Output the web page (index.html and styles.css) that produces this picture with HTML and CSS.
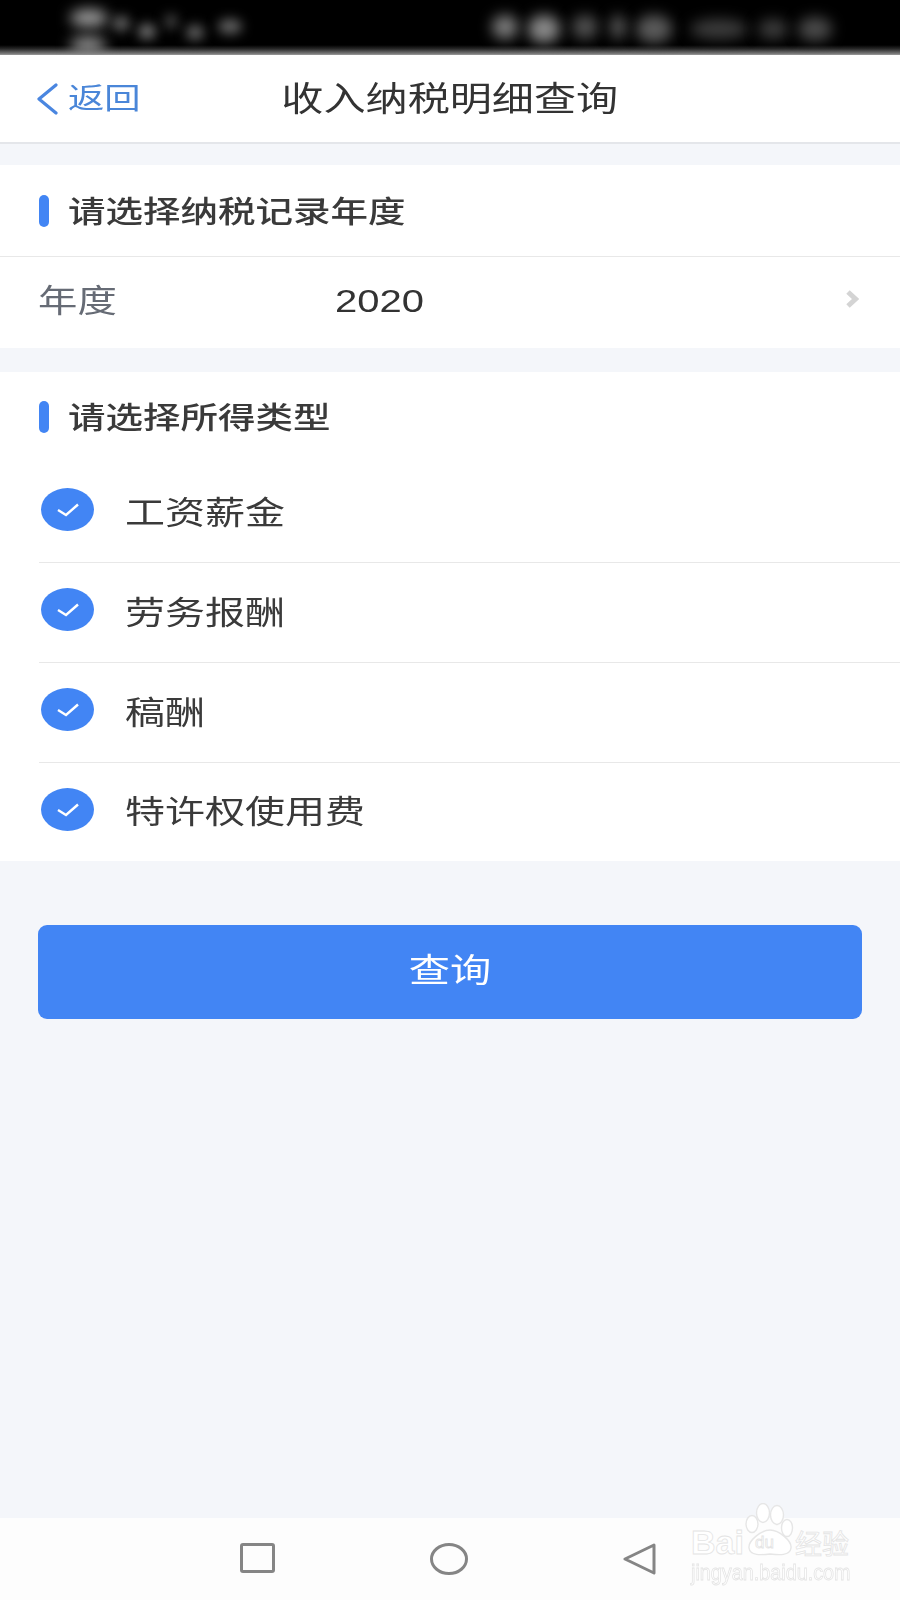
FILE: index.html
```html
<!DOCTYPE html>
<html lang="zh-CN">
<head>
<meta charset="utf-8">
<title>收入纳税明细查询</title>
<link rel="stylesheet" href="styles.css">
</head>
<body>
<div class="page">
  <div class="status">
    <div class="status-left">
      <div class="sig">
        <i class="blob s1"></i>
        <i class="blob s2"></i>
      </div>
      <div class="sig-dots">
        <i class="dot d1"></i><i class="dot d2"></i><i class="dot d3"></i><i class="dot d4"></i><i class="dot d5"></i>
      </div>
    </div>
    <div class="status-right">
      <i class="blob r1"></i><i class="blob r2"></i><i class="blob r3"></i><i class="blob r4"></i>
      <i class="blob r5"></i><i class="blob r6"></i><i class="blob r7"></i><i class="blob r8"></i>
    </div>
  </div>

  <header class="header">
    <div class="back">
      <svg class="back-icon" width="22" height="32" viewBox="0 0 22 32"><path d="M20 2 L3 16 L20 30" fill="none" stroke="#4a86e0" stroke-width="3.2" stroke-linecap="round" stroke-linejoin="round"/></svg>
      <span class="back-text sx">返回</span>
    </div>
    <h1 class="title sx-c">收入纳税明细查询</h1>
    <div></div>
  </header>

  <section class="card first">
    <div class="sec-head bordered"><i class="bar"></i><span class="sec-title sx">请选择纳税记录年度</span></div>
    <div class="year-row">
      <span class="year-label"><span class="sx label-text">年度</span></span>
      <span class="year-value"><span class="sx value-text">2020</span></span>
      <svg class="year-arrow" width="14" height="18" viewBox="0 0 14 18"><path d="M3 2 L10.5 9 L3 16" fill="none" stroke="#d4d4d4" stroke-width="5"/></svg>
    </div>
  </section>

  <section class="card second">
    <div class="sec-head plain"><i class="bar"></i><span class="sec-title sx">请选择所得类型</span></div>
    <div class="opt">
      <svg class="check" width="53" height="43" viewBox="0 0 53 43"><ellipse cx="26.5" cy="21.5" rx="26.5" ry="21.5" fill="#4285f4"/><path d="M17 22 L25 27 L37 16.5" fill="none" stroke="#fff" stroke-width="2.4"/></svg>
      <span class="sx opt-text">工资薪金</span>
    </div>
    <div class="opt">
      <svg class="check" width="53" height="43" viewBox="0 0 53 43"><ellipse cx="26.5" cy="21.5" rx="26.5" ry="21.5" fill="#4285f4"/><path d="M17 22 L25 27 L37 16.5" fill="none" stroke="#fff" stroke-width="2.4"/></svg>
      <span class="sx opt-text">劳务报酬</span>
    </div>
    <div class="opt">
      <svg class="check" width="53" height="43" viewBox="0 0 53 43"><ellipse cx="26.5" cy="21.5" rx="26.5" ry="21.5" fill="#4285f4"/><path d="M17 22 L25 27 L37 16.5" fill="none" stroke="#fff" stroke-width="2.4"/></svg>
      <span class="sx opt-text">稿酬</span>
    </div>
    <div class="opt last">
      <svg class="check" width="53" height="43" viewBox="0 0 53 43"><ellipse cx="26.5" cy="21.5" rx="26.5" ry="21.5" fill="#4285f4"/><path d="M17 22 L25 27 L37 16.5" fill="none" stroke="#fff" stroke-width="2.4"/></svg>
      <span class="sx opt-text">特许权使用费</span>
    </div>
  </section>

  <div class="action">
    <button class="query"><span class="sx-c">查询</span></button>
  </div>

  <nav class="nav">
    <svg width="35" height="30" viewBox="0 0 35 30"><rect x="1.5" y="1.5" width="32" height="27" rx="1.5" fill="none" stroke="#858585" stroke-width="3"/></svg>
    <svg width="38" height="32" viewBox="0 0 38 32"><ellipse cx="19" cy="16" rx="17.5" ry="14.5" fill="none" stroke="#858585" stroke-width="3"/></svg>
    <svg width="33" height="32" viewBox="0 0 33 32"><path d="M31 2 L2 16 L31 30 Z" fill="none" stroke="#858585" stroke-width="3" stroke-linejoin="round"/></svg>

    <div class="mark">
      <div class="mark-top">
        <span class="mark-bai">Bai</span>
        <svg class="paw" width="50" height="54" viewBox="0 0 50 54">
          <g fill="#fff" stroke="#e6e6e6" stroke-width="1.4">
            <ellipse cx="7" cy="21" rx="6" ry="8.5"/>
            <ellipse cx="18" cy="10" rx="6.5" ry="9.5"/>
            <ellipse cx="32" cy="12" rx="6.5" ry="9.5"/>
            <ellipse cx="42" cy="25" rx="5.5" ry="8.5"/>
            <path d="M25 27 C34 27 47 38 46 45 C45 53 34 52 25 51 C16 52 5 53 4 45 C3 38 16 27 25 27 Z"/>
          </g>
        </svg>
        <span class="mark-du">du</span>
        <span class="mark-jy">经验</span>
      </div>
      <div class="mark-url">jingyan.baidu.com</div>
    </div>
  </nav>
</div>
</body>
</html>
```
FILE: styles.css
```css
* { box-sizing: border-box; }
html, body { margin: 0; padding: 0; }
body {
  width: 900px;
  height: 1600px;
  overflow: hidden;
  font-family: "Noto Sans CJK SC", "Liberation Sans", sans-serif;
  background: #f4f6fa;
  color: #333;
}
.page { width: 900px; height: 1600px; display: flex; flex-direction: column; position: relative; overflow: hidden; }

.sx { display: inline-block; transform: scaleX(1.25); transform-origin: left center; white-space: nowrap; filter: blur(.4px); }
.sx-c { display: inline-block; transform: scaleX(1.25); transform-origin: center; white-space: nowrap; filter: blur(.4px); }

/* status bar */
.status {
  height: 55px;
  flex: none;
  background: linear-gradient(to bottom, #000 0, #000 45px, #2a2a2a 49px, #808080 54px, #a0a0a0 55px);
  display: flex;
  justify-content: space-between;
  padding: 0 68px 0 70px;
  overflow: hidden;
}
.status-left { display: flex; gap: 4px; }
.sig { display: flex; flex-direction: column; gap: 9px; padding-top: 9px; }
.sig-dots { display: flex; gap: 8px; padding-top: 16px; }
.blob { display: block; background: #fff; filter: blur(7px); border-radius: 50%; }
.dot { display: block; width: 18px; height: 15px; background: #666; filter: blur(6px); border-radius: 50%; }
.d2 { margin-top: 8px; background: #777; }
.d3 { margin-top: -2px; width: 14px; background: #444; }
.d4 { margin-top: 9px; background: #666; }
.d5 { margin-top: 3px; width: 24px; margin-left: 6px; background: #666; }
.s1 { width: 38px; height: 18px; background: #999; }
.s2 { width: 36px; height: 18px; background: #8a8a8a; }
.status-right { display: flex; gap: 10px; padding-top: 15px; }
.r1 { width: 26px; height: 24px; background: #7c7c7c; }
.r2 { width: 32px; height: 28px; background: #888; }
.r3 { width: 26px; height: 24px; background: #505050; margin-left: 2px; }
.r4 { width: 16px; height: 24px; background: #585858; margin-left: 2px; }
.r5 { width: 36px; height: 28px; background: #5a5a5a; }
.r6 { width: 58px; height: 20px; background: #3c3c3c; margin: 4px 0 0 8px; }
.r7 { width: 30px; height: 20px; background: #3c3c3c; margin-top: 4px; }
.r8 { width: 34px; height: 24px; background: #4a4a4a; margin-top: 2px; }

/* header */
.header {
  height: 89px;
  flex: none;
  background: #fff;
  border-bottom: 2px solid #e4e6ea;
  display: grid;
  grid-template-columns: 1fr auto 1fr;
  align-items: center;
}
.back { display: flex; align-items: center; padding-left: 36px; color: #4a86d8; }
.back-icon { margin-right: 10px; }
.back-text { font-size: 29px; line-height: 1; margin-bottom: 4px; }
.title { margin: 0 0 4px; font-size: 33.7px; line-height: 1; font-weight: 400; color: #333; }

/* cards */
.card { background: #fff; flex: none; }
.first { margin-top: 21px; }
.second { margin-top: 24px; height: 489px; }
.sec-head { height: 91px; display: flex; align-items: center; padding-left: 39px; }
.plain { padding-bottom: 2px; }
.bordered { height: 92px; border-bottom: 1px solid #e8e8e8; }
.bar { display: block; width: 10px; height: 32px; background: #4285f4; border-radius: 5px; margin-right: 19px; }
.sec-title { font-size: 30px; line-height: 1; font-weight: 500; color: #3a3a3a; margin-bottom: 4px; }

.year-row { height: 91px; display: flex; align-items: center; padding: 0 41px 0 38px; }
.year-label { width: 297px; margin-bottom: 6px; }
.label-text { font-size: 31.5px; line-height: 1; color: #666b75; }
.year-value { flex: 1; margin-bottom: 4px; }
.value-text { font-family: "Liberation Sans", sans-serif; font-size: 32px; line-height: 1; color: #333; }
.year-arrow { margin-bottom: 8px; }

.opt {
  height: 100px;
  margin-left: 39px;
  display: flex;
  align-items: center;
  border-bottom: 1px solid #e8e8e8;
}
.opt.last { border-bottom: 0; height: 98px; }
.check { margin: 0 31px 6px 2px; flex: none; }
.opt-text { font-size: 32px; line-height: 1; color: #3a3a3a; margin-bottom: 6px; }

/* button */
.action { padding: 64px 38px 0; flex: 1; }
.query {
  display: flex;
  align-items: center;
  justify-content: center;
  width: 824px;
  height: 94px;
  padding: 0 0 8px;
  border: 0;
  border-radius: 9px;
  background: #4285f4;
  color: #fff;
  font-family: inherit;
  font-size: 33px;
  line-height: 1;
}

/* nav */
.nav {
  height: 82px;
  flex: none;
  background: #fdfdfd;
  display: flex;
  align-items: flex-start;
  gap: 155px;
  padding: 25px 0 0 240px;
  position: relative;
}
.mark { position: absolute; left: 691px; top: -15px; width: 170px; height: 80px; }
.mark-top { display: flex; align-items: flex-end; height: 54px; position: relative; }
.mark-bai, .mark-jy, .mark-du, .mark-url { -webkit-text-stroke: .8px #e4e4e4; color: #fff; white-space: nowrap; }
.mark-bai { font-family: "Liberation Sans", sans-serif; font-size: 34px; line-height: 30px; font-weight: 700; width: 54px; display: inline-block; }
.paw { display: block; flex: none; }
.mark-du { position: absolute; left: 64px; top: 30px; font-family: "Liberation Sans", sans-serif; font-size: 17px; line-height: 20px; }
.mark-jy { font-size: 27px; line-height: 28px; width: 56px; }
.mark-url { font-family: "Liberation Sans", sans-serif; font-size: 22px; line-height: 24px; margin-top: 4px; display: inline-block; transform: scaleX(.9); transform-origin: left; }
```
